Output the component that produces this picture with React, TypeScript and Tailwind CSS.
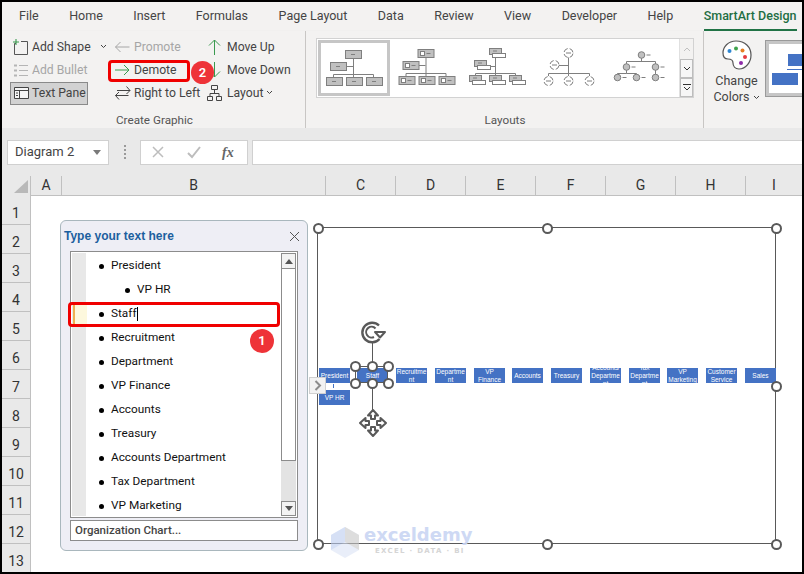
import React from "react";

const tabs = ["File", "Home", "Insert", "Formulas", "Page Layout", "Data", "Review", "View", "Developer", "Help"];
const colHeads: [string, number][] = [["A", 31], ["B", 264], ["C", 70], ["D", 70], ["E", 70], ["F", 70], ["G", 70], ["H", 70], ["I", 56]];
const rows = ["1", "2", "3", "4", "5", "6", "7", "8", "9", "10", "11", "12", "13"];

const paneItems: { t: string; sub?: boolean; sel?: boolean }[] = [
  { t: "President" }, { t: "VP HR", sub: true }, { t: "Staff", sel: true }, { t: "Recruitment" }, { t: "Department" },
  { t: "VP Finance" }, { t: "Accounts" }, { t: "Treasury" }, { t: "Accounts Department" }, { t: "Tax Department" }, { t: "VP Marketing" },
];

const boxes: { x: number; y?: number; l: string[] }[] = [
  { x: 319, l: ["President"] }, { x: 319, y: 390, l: ["VP HR"] }, { x: 357, l: ["Staff"] }, { x: 396, l: ["Recruitme", "nt"] },
  { x: 435, l: ["Departme", "nt"] }, { x: 474, l: ["VP", "Finance"] }, { x: 512, l: ["Accounts"] }, { x: 551, l: ["Treasury"] },
  { x: 590, l: ["Accounts", "Departme", "nt"] }, { x: 629, l: ["Tax", "Departme", "nt"] }, { x: 667, l: ["VP", "Marketing"] },
  { x: 706, l: ["Customer", "Service"] }, { x: 745, l: ["Sales"] },
];

const frameHandles = [[318, 228], [547, 228], [776, 228], [318, 386], [776, 386], [318, 544], [547, 544], [776, 544]];
const staffHandles = [[355, 366], [372.5, 366], [388, 366], [355, 383], [372.5, 383], [388, 383]];

const G = "#c0c0c0";
const S = "#7f7f7f";

function Rect({ x, y, w, h, fill = G }: { x: number; y: number; w: number; h: number; fill?: string }) {
  return <rect x={x + 0.5} y={y + 0.5} width={w} height={h} fill={fill} stroke={S} strokeWidth="1" />;
}

function Thumb1({ mark, viewBox = "0 0 72 56", w = 72, h = 56 }: { mark?: boolean; viewBox?: string; w?: number; h?: number }) {
  const off = mark ? -1.5 : 0;
  const bx = (x: number, y: number, bw: number) => (
    <g key={x + "-" + y}>
      <Rect x={x + off} y={y} w={bw} h={8} />
      {mark && <rect x={x + off + 3} y={y + 2.5} width={4} height={4} fill="#fff" stroke={S} />}
      <line x1={x + off + (mark ? 9 : 6)} x2={x + off + (mark ? 13 : 10)} y1={y + 4.5} y2={y + 4.5} stroke={S} />
    </g>
  );
  return (
    <svg width={w} height={h} viewBox={viewBox}>
      <g stroke={S} fill="none">
        <path d={`M${35.5 + off} 18V37M${15.5 + off} 38V34.5H${55.5 + off}V38M${28 + off} 26.5H${35 + off}`} />
      </g>
      {bx(27, 10, 16)}
      {bx(12, 22, 16)}
      {bx(8, 37, 16)}
      {bx(28, 37, 16)}
      {bx(48, 37, 16)}
    </svg>
  );
}

function Thumb3() {
  const bx = (x: number, y: number) => (
    <g key={x + "-" + y}>
      <Rect x={x} y={y} w={12} h={6} />
      <Rect x={x + 3} y={y + 5} w={13} h={4} fill="#fff" />
      <line x1={x + 4} x2={x + 8} y1={y + 3} y2={y + 3} stroke={S} />
    </g>
  );
  return (
    <svg width="72" height="56" viewBox="0 0 72 56">
      <path d="M31.5 18V36M11.5 36V34.5H51.5V36M20 27.5H31" stroke={S} fill="none" />
      {bx(25, 9)}
      {bx(10, 21)}
      {bx(5, 36)}
      {bx(25, 36)}
      {bx(45, 36)}
    </svg>
  );
}

function Thumb4() {
  const c = (x: number, y: number) => (
    <g key={x + "-" + y} stroke={S} fill="#fff">
      <circle cx={x} cy={y} r="4.5" strokeDasharray="5 2.1" strokeDashoffset="-0.6" />
      <line x1={x - 2.5} x2={x + 2.5} y1={y} y2={y} />
    </g>
  );
  return (
    <svg width="72" height="56" viewBox="0 0 72 56">
      <path d="M32.5 18V37M12.5 37V34.5H53.5V37M23 26.5H32" stroke={S} fill="none" />
      {c(32.5, 14)}
      {c(18.5, 26)}
      {c(12.5, 42)}
      {c(32.5, 42)}
      {c(53.5, 42)}
    </svg>
  );
}

function Thumb5() {
  const c = (x: number, y: number) => (
    <g key={x + "-" + y}>
      <circle cx={x} cy={y} r="3.3" fill={G} stroke={S} />
      <line x1={x + 5} x2={x + 9} y1={y} y2={y} stroke={S} />
    </g>
  );
  return (
    <svg width="72" height="56" viewBox="0 0 72 56">
      <path d="M33.5 19V22.5M18.5 28V22.5H47.5V38M18.5 31V34.5H9.5V36M18.5 34.5H28.5V36" stroke={S} fill="none" />
      {c(33.5, 16)}
      {c(18.5, 28)}
      {c(47.5, 28)}
      {c(9.5, 38.5)}
      {c(28.5, 38.5)}
      {c(47.5, 38.5)}
    </svg>
  );
}

function Btn({ icon, label, disabled }: { icon: React.ReactNode; label: React.ReactNode; disabled?: boolean }) {
  return (
    <div className={`flex h-[23px] items-center whitespace-nowrap ${disabled ? "text-[#a6a6a6]" : "text-[#444444]"}`}>
      {icon}
      <span>{label}</span>
    </div>
  );
}

function Chev() {
  return (
    <svg width="7" height="5" viewBox="0 0 7 5">
      <path d="M1 1l2.5 2.5L6 1" fill="none" stroke="#444" />
    </svg>
  );
}

function Palette() {
  return (
    <svg width="30" height="32" viewBox="0 0 30 32">
      <path d="M14 2C6 2 1 8 1 14c0 4 2 6 5 6 3 0 5 1 5 4 0 3 2 6 6 6 7 0 12-7 12-14C29 8 23 2 14 2z" fill="#fff" stroke="#555" strokeWidth="1.2" />
      <circle cx="7.5" cy="12" r="2" fill="#2e86d1" />
      <circle cx="14" cy="9.5" r="2" fill="#3fa34d" />
      <circle cx="20.5" cy="11.5" r="2" fill="#e67e22" />
      <circle cx="23" cy="18" r="2" fill="#e5393f" />
      <circle cx="19" cy="24" r="2" fill="#8e2ca8" />
    </svg>
  );
}

function Rotate() {
  return (
    <svg width="28" height="26" viewBox="0 0 28 26">
      <path d="M20 6.500A9.800 9.800 0 1 0 20.500 20" fill="none" stroke="#595959" strokeWidth="2.4" />
      <path d="M16.500 9.500A5.400 5.400 0 1 0 15 18" fill="none" stroke="#595959" strokeWidth="2" />
      <path d="M16 13h10l-5 5.500z" fill="#fff" stroke="#595959" strokeWidth="2" strokeLinejoin="round" />
    </svg>
  );
}

function MoveIcon() {
  return (
    <svg width="30" height="30" viewBox="0 0 30 30">
      <path d="M15 2l5 5.500h-3v3.500h-4V7.500h-3zM15 28l5-5.500h-3V19h-4v3.500h-3zM2 15l5.500-5v3H11v4H7.500v3zM28 15l-5.500-5v3H19v4h3.500v3z" fill="#fff" stroke="#595959" strokeWidth="2" strokeLinejoin="round" />
    </svg>
  );
}

export default function App() {
  return (
    <div className="h-[574px] w-[804px] overflow-hidden border-2 border-black bg-white font-['Roboto','Noto_Sans',sans-serif] text-[12.2px] text-[#444444]">
      {/* tabs */}
      <div className="flex h-[29px] items-center gap-[30.5px] bg-[#f3f2f1] pl-[17px] text-[12.5px] text-[#444444]">
        {tabs.map((t) => <span key={t} className="whitespace-nowrap">{t}</span>)}
        <span className="relative -mr-8 flex h-[29px] items-center whitespace-nowrap font-medium text-[#1e6e43]">
          SmartArt Design
          <span className="absolute bottom-0 left-0 right-0 h-[2px] bg-[#217346]" />
        </span>
      </div>

      {/* ribbon */}
      <div className="flex h-[97px] bg-[#f3f2f1] shadow-[0_3px_4px_#c8c8c8]">
        {/* Create graphic */}
        <div className="flex w-[304px] flex-col border-r border-r-[#c8c6c4]">
          <div className="flex pt-[4.5px]">
            <div className="ml-[8px] flex w-[98px] flex-col">
              <Btn
                label={<span className="flex items-center gap-[9px]">Add Shape<Chev /></span>}
                icon={
                  <svg width="22" height="18" viewBox="0 0 22 18">
                    <path d="M6 5.500H4.500V16.500H17.500V3.500H11" fill="none" stroke="#555" />
                    <path d="M6 1v6M3 4h6" stroke="#3a9a4f" strokeWidth="1.1" />
                  </svg>
                }
              />
              <Btn
                disabled
                label="Add Bullet"
                icon={
                  <svg width="22" height="18" viewBox="0 0 22 18">
                    <path d="M4 3.500h3v2H4zM4 8.500h3v2H4zM4 13.500h3v2H4z" fill="#b5b5b5" />
                    <path d="M9 4.500h9M9 9.500h9M9 14.500h9" stroke="#b5b5b5" />
                  </svg>
                }
              />
              <div className="flex h-[23px] w-[78px] items-center whitespace-nowrap border border-[#8a8a8a] bg-[#d2d2d2] text-[#444444]">
                <svg width="21" height="16" viewBox="0 0 21 16">
                  <path d="M3.500 2.500H17.500V13.500H3.500zM3.500 5.500H17.500M8.500 5.500V13.500M5 8h2M5 10.500h2" fill="#f5f5f5" stroke="#444" />
                </svg>
                <span>Text Pane</span>
              </div>
            </div>
            <div className="flex w-[98px] flex-col pl-[6px]">
              <Btn
                disabled
                label="Promote"
                icon={
                  <svg width="20" height="14" viewBox="0 0 20 14">
                    <path d="M15.500 7H1.500M6.500 2L1.500 7l5 5" fill="none" stroke="#a6a6a6" />
                  </svg>
                }
              />
              <Btn
                label="Demote"
                icon={
                  <svg width="20" height="14" viewBox="0 0 20 14">
                    <path d="M1 7h14M10 2l5 5-5 5" fill="none" stroke="#3a9a4f" />
                  </svg>
                }
              />
              <Btn
                label="Right to Left"
                icon={
                  <svg width="20" height="18" viewBox="0 0 20 18">
                    <path d="M3 6.500h13M12.500 2.500l3.500 4-3.500 3.500M1.500 11.500h13M5 8l-3.500 3.500L5 15.500" fill="none" stroke="#444" />
                  </svg>
                }
              />
            </div>
            <div className="flex flex-col">
              <Btn
                label="Move Up"
                icon={
                  <svg width="20" height="18" viewBox="0 0 20 18" className="mr-[1px]">
                    <path d="M8.500 17V2M3 7.500L8.500 2 14 7.500" fill="none" stroke="#3a9a4f" />
                  </svg>
                }
              />
              <Btn
                label="Move Down"
                icon={
                  <svg width="20" height="18" viewBox="0 0 20 18" className="mr-[1px]">
                    <path d="M8.500 1V16M3 10.500L8.500 16 14 10.500" fill="none" stroke="#3a9a4f" />
                  </svg>
                }
              />
              <Btn
                label={<span className="flex items-center gap-[3px]">Layout<Chev /></span>}
                icon={
                  <svg width="20" height="18" viewBox="0 0 20 18" className="mr-[1px]">
                    <path d="M5.500 1.500h6v4h-6zM1.500 12.500h5v4h-5zM10.500 12.500h5v4h-5zM8.500 5.500V9.500M4 12.500V9.500H13V12.500" fill="none" stroke="#444" />
                  </svg>
                }
              />
            </div>
          </div>
          <div className="mt-auto pl-[114px] text-[11.7px] leading-[15px] text-[#555555]">Create Graphic</div>
        </div>

        {/* Layouts */}
        <div className="flex w-[398px] flex-col border-r border-r-[#c8c6c4] pl-[10px]">
          <div className="mt-[7px] flex h-[60px] w-[378px] border border-[#d2d2d2] bg-white">
            <div className="m-[1px] box-border flex h-[56px] w-[72px] items-center justify-center border-[3px] border-[#c6c6c6]">
              <Thumb1 viewBox="3 3 66 50" w={66} h={50} />
            </div>
            <div className="ml-[1px] w-[73px]"><Thumb1 mark /></div>
            <div className="w-[73px]"><Thumb3 /></div>
            <div className="w-[73px]"><Thumb4 /></div>
            <div className="w-[71px]"><Thumb5 /></div>
            <div className="flex w-[15px] flex-col border-l border-l-[#e0e0e0]">
              <div className="flex h-[20px] items-center justify-center bg-[#f3f2f1]">
                <svg width="8" height="5" viewBox="0 0 8 5"><path d="M1 4l3-3 3 3" fill="none" stroke="#c0c0c0" /></svg>
              </div>
              <div className="flex h-[19px] items-center justify-center border border-[#bdbdbd] bg-[#f6f6f6]">
                <svg width="8" height="5" viewBox="0 0 8 5"><path d="M1 1l3 3 3-3" fill="none" stroke="#333" /></svg>
              </div>
              <div className="flex h-[19px] items-center justify-center border border-[#bdbdbd] bg-[#f6f6f6]">
                <svg width="8" height="7" viewBox="0 0 8 7"><path d="M0 .5h8M1 3l3 3 3-3" fill="none" stroke="#333" /></svg>
              </div>
            </div>
          </div>
          <div className="mt-auto w-[378px] text-center text-[11.7px] leading-[15px] text-[#555555]">Layouts</div>
        </div>

        {/* Change colors */}
        <div className="flex w-[61px] flex-col items-center pl-[4px] pt-[8px] text-[12.5px]">
          <Palette />
          <div className="mt-[2px] text-center leading-[16px] text-[#444444]">Change</div>
          <div className="flex items-center gap-[3px] leading-[16px] text-[#444444]">Colors<Chev /></div>
        </div>

        {/* style thumb */}
        <div className="mt-[9px] h-[57px] flex-1 overflow-hidden border-y border-l border-[#9a9a9a] bg-white">
          <div className="relative h-full border-y-[3px] border-l-[3px] border-[#c6c6c6]">
            <div className="absolute left-[19px] top-[10px] h-[12px] w-[20px] bg-[#4472c4]" />
            <div className="absolute left-[18px] top-[25px] h-[1px] w-[20px] bg-[#4472c4]" />
            <div className="absolute left-[3px] top-[29px] h-[12px] w-[26px] bg-[#4472c4]" />
          </div>
        </div>
      </div>

      {/* formula bar */}
      <div className="flex h-[48px] items-center bg-[#e9e9e9] pl-[5px]">
        <div className="flex h-[25px] w-[102px] items-center justify-between border border-[#d0d0d0] bg-white px-[7px] text-[13px] text-[#444444]">
          <span>Diagram 2</span>
          <svg width="8" height="5" viewBox="0 0 8 5"><path d="M0 0h8L4 5z" fill="#7a7a7a" /></svg>
        </div>
        <div className="flex w-[31px] flex-col items-center gap-[2px]">
          <span className="h-[2px] w-[2px] bg-[#9a9a9a]" />
          <span className="h-[2px] w-[2px] bg-[#9a9a9a]" />
          <span className="h-[2px] w-[2px] bg-[#9a9a9a]" />
          <span className="h-[2px] w-[2px] bg-[#9a9a9a]" />
        </div>
        <div className="flex h-[25px] w-[108px] items-center border border-[#d0d0d0] bg-white">
          <svg width="14" height="14" viewBox="0 0 14 14" className="ml-[10px]"><path d="M2 2l10 10M12 2L2 12" stroke="#bdbdbd" strokeWidth="1.5" /></svg>
          <svg width="14" height="14" viewBox="0 0 14 14" className="ml-[22px]"><path d="M1 8l4 4 8-10" fill="none" stroke="#bdbdbd" strokeWidth="2" /></svg>
          <span className="ml-[21px] font-['Liberation_Serif',serif] text-[14px] font-bold italic text-[#666666]">fx</span>
        </div>
        <div className="ml-[4px] h-[25px] flex-1 border-y border-l border-[#d0d0d0] bg-white" />
      </div>

      {/* sheet */}
      <div className="relative h-[396px] bg-white">
        <div className="flex h-[20px] bg-[#e9e9e9]">
          <div className="relative h-[20px] w-[29px] border-r border-r-[#c0c0c0]">
            <svg width="14" height="13" viewBox="0 0 14 13" className="absolute left-[12px] top-[4px]"><path d="M14 0V13H0z" fill="#b9b9b9" /></svg>
          </div>
          {colHeads.map(([c, w]) => (
            <div
              key={c}
              className="flex h-[20px] items-center justify-center border-b border-r border-[#c0c0c0] text-[14px] text-[#333333] last:border-r-0"
              style={{ width: w }}
            >
              {c}
            </div>
          ))}
        </div>
        <div className="w-[29px] bg-[#e9e9e9]">
          {rows.map((r) => (
            <div key={r} className="flex h-[29px] items-center justify-center border-b border-r border-[#c0c0c0] pt-[7px] text-[14px] text-[#333333]">
              {r}
            </div>
          ))}
        </div>

        {/* text pane */}
        <div className="absolute left-[58px] top-[44px] flex h-[331px] w-[248px] flex-col rounded-[6px] border border-[#a9b7bd] bg-[#eeeef5] px-[9px]">
          <div className="-mx-[6px] flex h-[30px] items-center justify-between pr-[4px] font-['Liberation_Sans',sans-serif] text-[12px] font-bold text-[#1c5f9e]">
            <span>Type your text here</span>
            <svg width="11" height="11" viewBox="0 0 11 11"><path d="M1 1l9 9M10 1l-9 9" stroke="#555" /></svg>
          </div>
          <div className="relative h-[267px] border border-[#8c8c8c] bg-white text-[11.8px] text-[#111111]">
            <div className="absolute bottom-[1px] left-[1px] top-[1px] w-[14px] bg-[#e8e8e8]" />
            <div className="absolute left-[2px] right-[16px] top-[2px]">
              {paneItems.map((it) => (
                <div key={it.t} className="relative flex h-[24px] items-center">
                  {it.sel && (
                    <div className="absolute bottom-0 left-0 top-0 w-[14px] border-l-2 border-l-[#f0b050] bg-[#fdf8dd]" />
                  )}
                  <span className={`absolute top-[10px] h-[5px] w-[5px] rounded-full bg-black ${it.sub ? "left-[52px]" : "left-[26px]"}`} />
                  <span className={`absolute whitespace-nowrap ${it.sub ? "left-[64px]" : "left-[38px]"}`}>
                    {it.t}
                    {it.sel && <span className="ml-[0.5px] inline-block h-[14px] w-[1px] bg-black align-middle" />}
                  </span>
                </div>
              ))}
            </div>
            <div className="absolute bottom-[1px] right-[1px] top-[1px] flex w-[15px] flex-col bg-[#e3e3e3]">
              <div className="flex h-[16px] items-center justify-center border border-[#8c8c8c] bg-[#f3f3f3]">
                <svg width="8" height="5" viewBox="0 0 8 5"><path d="M4 0l4 5H0z" fill="#555" /></svg>
              </div>
              <div className="h-[192px] border-x border-b border-[#8c8c8c] bg-white" />
              <div className="mt-auto flex h-[15px] items-center justify-center border border-[#8c8c8c] bg-[#f3f3f3]">
                <svg width="8" height="5" viewBox="0 0 8 5"><path d="M0 0h8L4 5z" fill="#555" /></svg>
              </div>
            </div>
          </div>
          <div className="mt-[2px] flex h-[21px] items-center border border-[#8c8c8c] bg-white pl-[4px] text-[11.5px] font-medium text-[#444444]">
            Organization Chart...
          </div>
        </div>

        {/* pane toggle */}
        <div className="absolute left-[307px] top-[201px] z-10 flex h-[17px] w-[17px] items-center justify-center border border-[#d0d0d0] bg-[#f2f2f2]">
          <svg width="8" height="11" viewBox="0 0 8 11"><path d="M1.500 1l4.500 4.500L1.500 10" fill="none" stroke="#8c8c8c" strokeWidth="2" /></svg>
        </div>

        {/* diagram frame */}
        <div className="absolute left-[315px] top-[51px] h-[317px] w-[459px] border border-[#595959]" />
        {boxes.map((b) => (
          <div
            key={b.l.join("") + b.x}
            className="absolute flex h-[15px] w-[31px] flex-col items-center justify-center overflow-hidden whitespace-nowrap bg-[#4472c4] text-center font-['Liberation_Sans',sans-serif] text-[6.5px] leading-[8px] text-white"
            style={{ left: b.x - 2, top: (b.y ?? 368) - 176 }}
          >
            {b.l.map((s) => <span key={s} className="shrink-0">{s}</span>)}
          </div>
        ))}
        <div className="absolute left-[331px] top-[208px] h-[4px] w-[1px] bg-[#4472c4]" />
        <div className="absolute left-[353px] top-[190px] h-[17px] w-[33px] border border-[#595959]" />
        <div className="absolute left-[370px] top-[166px] h-[25px] w-[1px] bg-[#595959]" />
        <div className="absolute left-[370px] top-[208px] h-[26px] w-[1px] bg-[#595959]" />
        {frameHandles.concat(staffHandles).map(([x, y]) => (
          <div
            key={x + "-" + y}
            className="absolute h-[11px] w-[11px] rounded-full border-2 border-[#595959] bg-white"
            style={{ left: x - 2 - 5.5, top: y - 176 - 5.5 }}
          />
        ))}
        <div className="absolute left-[357px] top-[143px]"><Rotate /></div>
        <div className="absolute left-[356px] top-[232px]"><MoveIcon /></div>

        {/* watermark */}
        <div className="absolute left-[329px] top-[351px] opacity-60">
          <svg width="28" height="31" viewBox="0 0 28 31">
            <path d="M14 0L28 8V23L14 31L0 23V8z" fill="#dbe4f6" />
            <path d="M14 0L28 8V23L14 15z" fill="#c8c8c8" />
            <path d="M0 8L14 0V15L0 23z" fill="#bccdf0" />
          </svg>
        </div>
        <div className="absolute left-[362px] top-[347px] font-['DejaVu_Sans',sans-serif] text-[18px] font-bold leading-[24px] text-[#c9d5f3] opacity-90">exceldemy</div>
        <div className="absolute left-[373px] top-[370px] font-['DejaVu_Sans',sans-serif] text-[7px] font-bold leading-[10px] tracking-[1.3px] text-[#d5d5d5]">EXCEL · DATA · BI</div>

        {/* callout */}
        <div className="absolute left-[66px] top-[126px] h-[25px] w-[212px] rounded-[4px] border-[3px] border-[#f00000]" />
        <div className="absolute left-[248px] top-[153px] flex h-[24px] w-[24px] items-center justify-center rounded-full bg-[#ee3338] text-[13px] font-semibold text-white">1</div>
      </div>

      {/* ribbon callouts */}
      <div className="absolute left-[108px] top-[60px] h-[22px] w-[82px] rounded-[4px] border-[3px] border-[#f00000]" />
      <div className="absolute left-[191px] top-[61px] flex h-[23px] w-[23px] items-center justify-center rounded-full bg-[#ee3338] text-[13px] font-semibold text-white">2</div>
    </div>
  );
}
